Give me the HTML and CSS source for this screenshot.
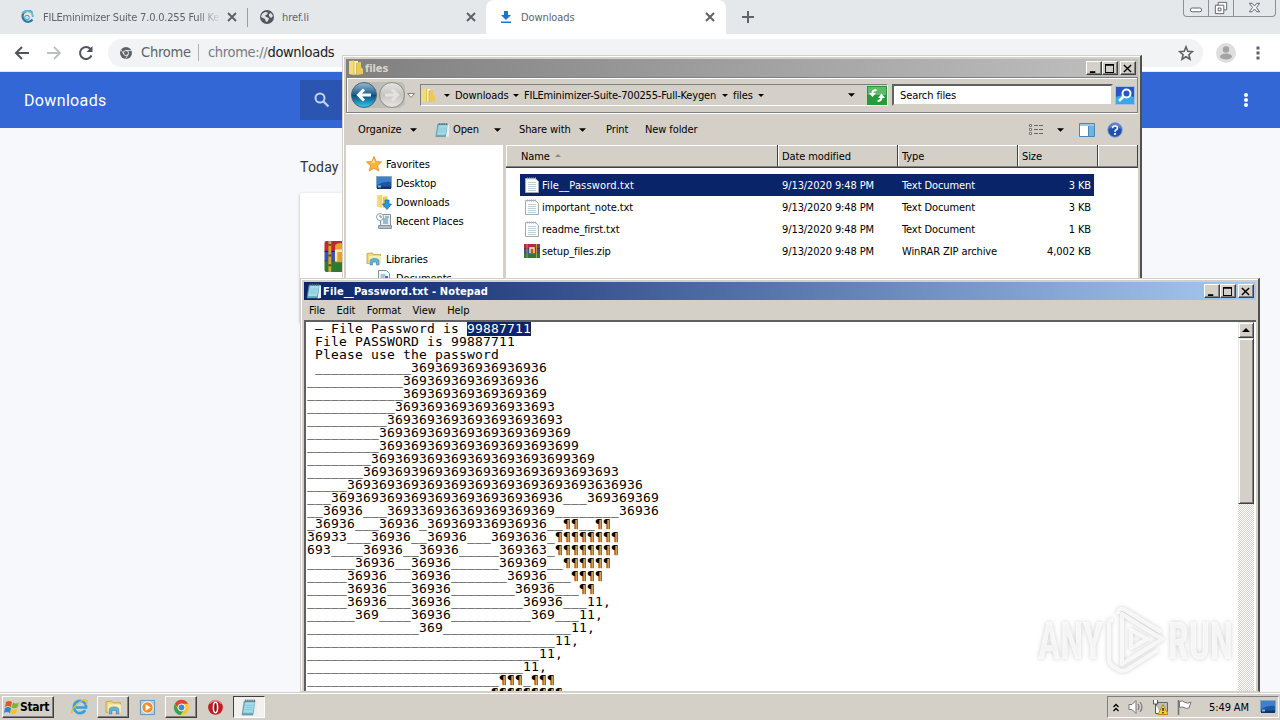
FILE: index.html
```html
<!DOCTYPE html>
<html lang="en">
<head>
  <meta charset="UTF-8" />
  <title>Downloads</title>
  <link rel="stylesheet" href="styles.css">
</head>
<body>
  <!-- Shared icons -->
  <svg class="sprite" aria-hidden="true">
    <symbol id="i-close" viewBox="0 0 10 10"><path d="M1 1l8 8M9 1L1 9" stroke="#5f6368" stroke-width="2" /></symbol>
    <symbol id="i-caret" viewBox="0 0 8 4"><path d="M0 0h8L4 4z" /></symbol>
    <symbol id="i-chrome" viewBox="0 0 24 24">
      <circle cx="12" cy="12" r="12" fill="#5f6368" />
      <circle cx="12" cy="12" r="5" fill="#5f6368" stroke="#f1f3f4" stroke-width="1.8" />
      <path d="M12 7h11M7.6 14.4L2.2 5.6M16.4 14.4L11.5 23" stroke="#f1f3f4" stroke-width="1.6" />
    </symbol>
    <symbol id="i-doc" viewBox="0 0 14 16">
      <path d="M.5 1.5h10l3 3v11H.5z" fill="#fbfcfc" stroke="#a3abae" />
      <path d="M2 1.5h9" stroke="#a6b4ba" stroke-width="2" stroke-dasharray="1 1" />
      <path d="M3 5.5h8M3 7.5h8M3 9.5h8M3 11.5h8M3 13.5h8" stroke="#c3ced4" />
    </symbol>
    <symbol id="i-notepad" viewBox="0 0 16 16">
      <path d="M3 2h10.500l-2 13H1z" fill="#69afc2" stroke="#57808e" stroke-width=".6" />
      <path d="M4 3h9l-2 10H2z" fill="#a2dcea" />
      <path d="M13.5 2l1.5.5V15l-3.500.5z" fill="#e7edf0" />
      <path d="M4 1.5h10" stroke="#4d5c63" stroke-width="2" stroke-dasharray="1 1" />
      <path d="M4 6h7M4 8h7M3.500 10h7" stroke="#7dc2d4" stroke-width=".7" />
    </symbol>
    <symbol id="i-folder" viewBox="0 0 16 16">
      <path d="M1 1l5-.5v14.500l-5-1z" fill="#f3dc78" />
      <path d="M6 1h4v13.500H6z" fill="#fdf6c4" />
      <path d="M6 .5v14.500" stroke="#d3b344" stroke-width=".8" />
      <path d="M8.500 2.500l4.500-.5v5l2 2v5l-6.500 1z" fill="#ebcb55" />
      <path d="M8.500 3v12" stroke="#c7a33a" stroke-width=".7" />
    </symbol>
    <symbol id="i-library" viewBox="0 0 16 14">
      <path d="M1 1.500l5-.5 2 1.500h6.500v9H1z" fill="#f0d978" stroke="#bf9c3d" stroke-width=".8" />
      <path d="M3 4h12v8H3z" fill="#f9efb5" />
      <path d="M4 13V9q0-2.500 4.500-2.500T13 9v4h-2.500v-3h-4v3z" fill="#5db3da" stroke="#3c88b3" stroke-width=".6" />
    </symbol>
    <symbol id="i-rar" viewBox="0 0 16 16">
      <path d="M0 1h16v5H0z" fill="#b62743" /><path d="M0 6h16v4.500H0z" fill="#3454aa" /><path d="M0 10.500h16V15H0z" fill="#287d37" />
      <path d="M11 1h5v5h-5z" fill="#7a3c8f" />
      <path d="M0 5.700h16M0 10.300h16" stroke="#2d2433" stroke-width=".6" />
      <path d="M3 1v14M12.500 1v14" stroke="#bd983b" stroke-width="1" />
      <path d="M5 4h6v7H5z" fill="#c8541e" /><path d="M6 10V5h4v5" fill="none" stroke="#f6e7bc" stroke-width="1.300" />
    </symbol>
    <symbol id="i-screen" viewBox="0 0 16 14">
      <path d="M.5.500h15v11H.5z" fill="#1f55a3" stroke="#85a6c4" />
      <path d="M1 1h14v5Q8 5 1 9z" fill="#3f80ca" />
      <path d="M1 10.500h14v2.500H1z" fill="#16345e" /><path d="M2 9.500h3v2H2z" fill="#73bde0" />
    </symbol>
    <symbol id="i-min" viewBox="0 0 12 10"><path d="M2 8h6v2H2z" /></symbol>
    <symbol id="i-max" viewBox="0 0 12 10"><path d="M1 0h10v10H1zM2 2v7h8V2z" fill-rule="evenodd" /></symbol>
    <symbol id="i-x" viewBox="0 0 12 10"><path d="M2 1l8 8M10 1L2 9" stroke="#000" stroke-width="1.600" /></symbol>
    <linearGradient id="g-back" x1="0" y1="0" x2="0" y2="1">
      <stop offset="0" stop-color="#9ab9cf" /><stop offset=".48" stop-color="#1d5f94" /><stop offset=".5" stop-color="#0d4579" /><stop offset="1" stop-color="#2fd0f2" />
    </linearGradient>
    <linearGradient id="g-fwd" x1="0" y1="0" x2="0" y2="1">
      <stop offset="0" stop-color="#e6e5e2" /><stop offset=".5" stop-color="#c6c4be" /><stop offset="1" stop-color="#e9e8e5" />
    </linearGradient>
  </svg>

  <!-- Browser -->
  <div class="browser">
    <div class="tabs">
      <div class="tab tab-first">
        <svg class="tab-icon" viewBox="0 0 14 14"><path d="M12 2.500a5.500 5.500 0 1 0 .5 7" fill="none" stroke="#247f9c" stroke-width="2.200" /><path d="M2 3q6-4 10 0l1 4" fill="none" stroke="#71b8cc" stroke-width="2" /><circle cx="7" cy="7.500" r="2.300" fill="#c2e7f2" stroke="#3a9bc0" /></svg>
        <span class="tab-title tab-fade">FILEminimizer Suite 7.0.0.255 Full Ke</span>
        <svg class="tab-close"><use href="#i-close" /></svg>
      </div>
      <div class="tab tab-second">
        <svg class="tab-icon" viewBox="0 0 14 14"><circle cx="7" cy="7" r="7" fill="#54585c" /><path d="M2 4l3-2 3 .5-1 2-2 1 1 1.500 3 1-1 3-2 1-1-3-2-1-2-1zM9 4l2-1 2 3-2 2-2-2z" fill="#e1e4e7" /></svg>
        <span class="tab-title">href.li</span>
        <svg class="tab-close"><use href="#i-close" /></svg>
      </div>
      <div class="tab tab-active">
        <svg class="tab-icon" viewBox="0 0 14 14"><path d="M5 1h4v4h3L7 10 2 5h3zM2 11.500h10v1.600H2z" fill="#1a73d9" /></svg>
        <span class="tab-title">Downloads</span>
        <svg class="tab-close"><use href="#i-close" /></svg>
      </div>
      <svg class="new-tab" viewBox="0 0 12 12"><path d="M6 0v12M0 6h12" stroke="#5f6368" stroke-width="2" /></svg>
      <div class="caption">
        <svg viewBox="0 0 25 17"><rect x="6.500" y="8.500" width="12" height="4" rx="2" fill="#fff" stroke="#5a5f66" /></svg>
        <svg viewBox="0 0 25 17"><path d="M9.500 2.500h9v8h-9z" fill="#fff" stroke="#5a5f66" /><path d="M6.500 5.500h9v9h-9z" fill="#fff" stroke="#5a5f66" /><path d="M9.500 8.500h3v3h-3z" fill="none" stroke="#5a5f66" /></svg>
        <svg class="caption-close" viewBox="0 0 42 17"><path d="M15.500 3.500h3l2.500 3 2.500-3h3l-3.500 4.500 3.500 4.500h-3l-2.500-3-2.500 3h-3l3.500-4.500z" fill="#fff" stroke="#5a5f66" /></svg>
      </div>
    </div>
    <div class="toolbar">
      <svg class="nav-icon" viewBox="0 0 16 16"><path d="M15 8H2M8 2L2 8l6 6" fill="none" stroke="#50545a" stroke-width="2" /></svg>
      <svg class="nav-icon" viewBox="0 0 16 16"><path d="M1 8h13M8 2l6 6-6 6" fill="none" stroke="#bcbfc3" stroke-width="1.800" /></svg>
      <svg class="nav-icon" viewBox="0 0 16 16"><path d="M13.500 10.500A6 6 0 1 1 12.500 4" fill="none" stroke="#50545a" stroke-width="2" /><path d="M14.500 1v6h-6z" fill="#50545a" /></svg>
      <div class="omnibox">
        <svg class="site-icon"><use href="#i-chrome" /></svg>
        <span class="site-name">Chrome</span>
        <span class="url">chrome://<b>downloads</b></span>
        <svg class="star" viewBox="0 0 16 16"><path d="M8 1.800l1.800 4.400 4.700.4-3.600 3.100 1.100 4.600L8 11.800l-4 2.500 1.100-4.600-3.600-3.100 4.700-.4z" fill="none" stroke="#5f6368" stroke-width="1.600" /></svg>
      </div>
      <svg class="avatar" viewBox="0 0 20 20"><circle cx="10" cy="10" r="10" fill="#dedede" /><circle cx="10" cy="6.500" r="3.200" fill="#a3a3a3" /><ellipse cx="10" cy="13.500" rx="6" ry="3" fill="#a3a3a3" /></svg>
      <svg class="dots" viewBox="0 0 4 14"><path d="M.5.500h3v3h-3zM.5 5.500h3v3h-3zM.5 10.500h3v3h-3z" fill="#5f6368" /></svg>
    </div>
    <div class="page-header">
      <span class="page-title">Downloads</span>
      <div class="page-search"><svg viewBox="0 0 16 16"><circle cx="6" cy="6" r="4.500" fill="none" stroke="#c4d2f0" stroke-width="2" /><path d="M9.500 9.500l5 5" stroke="#c4d2f0" stroke-width="2.200" /></svg></div>
      <svg class="page-dots" viewBox="0 0 4 14"><circle cx="2" cy="2" r="2" /><circle cx="2" cy="7" r="2" /><circle cx="2" cy="12" r="2" /></svg>
    </div>
    <div class="page">
      <div class="today">Today</div>
      <div class="card">
        <svg viewBox="0 0 32 32">
          <path d="M0 2q0-2 2-2h30v10H0z" fill="#c3262f" /><path d="M0 11h32v9H0z" fill="#3a50b4" /><path d="M0 21h32v11H2q-2 0-2-2z" fill="#2c7a34" />
          <path d="M0 10.500h32M0 20.500h32" stroke="#2b2230" stroke-width="1.500" />
          <path d="M5.500 0v32" stroke="#d3a733" stroke-width="3" /><path d="M4 4h3M4 15h3M4 25h3" stroke="#6d4a17" stroke-width="2" />
          <path d="M11 4q5-4 10 0v18H11z" fill="#e0a32e" /><path d="M12 21V10h8v11" fill="none" stroke="#fbe9b0" stroke-width="2.500" />
        </svg>
      </div>
    </div>
  </div>

  <!-- Explorer -->
  <div class="window explorer">
    <div class="titlebar titlebar-inactive">
      <svg class="title-icon"><use href="#i-folder" /></svg>
      <span class="title-text">files</span>
      <div class="win-btn"><svg><use href="#i-min" /></svg></div>
      <div class="win-btn"><svg><use href="#i-max" /></svg></div>
      <div class="win-btn win-close"><svg><use href="#i-x" /></svg></div>
    </div>
    <div class="address-band">
      <svg class="back-forward" viewBox="0 0 66 30">
        <path d="M12 2h40l3 4v18l-5 4H12z" fill="#bfbdb8" />
        <circle cx="14" cy="15" r="12.500" fill="url(#g-back)" stroke="#49637b" />
        <path d="M21 15H9M14 9.500L8.500 15l5.500 5.500" fill="none" stroke="#fff" stroke-width="3" />
        <circle cx="42" cy="15" r="12.500" fill="url(#g-fwd)" stroke="#8c8b87" />
        <path d="M35 15h12M42 9.500l5.500 5.500-5.500 5.500" fill="none" stroke="#e4e3e0" stroke-width="3" />
        <path d="M57.500 13.500h7L61 17.500z" fill="#fff" stroke="#807f7c" />
      </svg>
      <div class="address">
        <svg class="address-icon"><use href="#i-folder" /></svg>
        <svg class="caret-sm"><use href="#i-caret" /></svg>
        <span class="crumb crumb-downloads">Downloads</span>
        <svg class="caret-sm"><use href="#i-caret" /></svg>
        <span class="crumb crumb-suite">FILEminimizer-Suite-700255-Full-Keygen</span>
        <svg class="caret-sm"><use href="#i-caret" /></svg>
        <span class="crumb crumb-files">files</span>
        <svg class="caret-sm"><use href="#i-caret" /></svg>
        <svg class="caret address-drop"><use href="#i-caret" /></svg>
        <svg class="refresh" viewBox="0 0 20 19"><path d="M0 0h20v19H0z" fill="#279b38" /><path d="M1 1h18v8H1z" fill="#62b96b" /><path d="M5.500 7q0-3 4-3" fill="none" stroke="#fff" stroke-width="2" /><path d="M2 7h7L5.500 11z" fill="#fff" /><path d="M14.500 11q0 4-4 4" fill="none" stroke="#fff" stroke-width="2" /><path d="M11 12h7l-3.500-4.500z" fill="#fff" /></svg>
      </div>
      <div class="search-field">Search files</div>
      <svg class="search-go" viewBox="0 0 20 19"><path d="M.5.500h19v18H.5z" fill="#2457c5" stroke="#a9bde5" /><path d="M1 11q9-4 18 0v7H1z" fill="#35a9e8" /><circle cx="11.500" cy="7.500" r="4" fill="#2457c5" stroke="#fff" stroke-width="2" /><path d="M8.500 10.500L4 15" stroke="#fff" stroke-width="2.500" /></svg>
    </div>
    <div class="commands">
      <span class="cmd cmd-organize">Organize</span>
      <svg class="caret"><use href="#i-caret" /></svg>
      <svg class="cmd-icon"><use href="#i-notepad" /></svg>
      <span class="cmd cmd-open">Open</span>
      <svg class="caret"><use href="#i-caret" /></svg>
      <span class="cmd cmd-share">Share with</span>
      <svg class="caret"><use href="#i-caret" /></svg>
      <span class="cmd cmd-print">Print</span>
      <span class="cmd cmd-new">New folder</span>
      <svg class="view-mode" viewBox="0 0 16 12"><path d="M1.500.500h2v2h-2zM1.500 4.500h2v2h-2zM1.500 8.500h2v2h-2z" fill="#fff" stroke="#777" /><path d="M6 1.500h10M6 5.500h10M6 9.500h10" stroke="#666" stroke-dasharray="4 1" /></svg>
      <svg class="caret view-drop"><use href="#i-caret" /></svg>
      <svg class="preview" viewBox="0 0 16 14"><path d="M.5.500h15v13H.5z" fill="#fff" stroke="#4d85b2" /><path d="M1 1h14v2H1z" fill="#9cc7e3" /><path d="M10 3h5v10h-5z" fill="#6bb5e1" /><path d="M9.500 3v10" stroke="#4d85b2" /></svg>
      <svg class="help" viewBox="0 0 16 16"><circle cx="8" cy="8" r="7.300" fill="#2451ae" stroke="#8ba5d3" /><path d="M2 7q6-6 12 0a6 6 0 0 0-12 0" fill="#6285d0" /><path d="M5.500 6.200Q5.600 4 8 4t2.500 2Q10.500 7.300 9 8q-1 .6-1 1.800M8 11v2" fill="none" stroke="#fff" stroke-width="1.700" /></svg>
    </div>
    <div class="explorer-main">
      <div class="nav-pane">
        <div class="nav-item nav-top"><svg viewBox="0 0 16 16"><path d="M8 .5l2.200 5 5.300.5-4 3.700 1.200 5.300L8 12.300 3.300 15l1.200-5.300L.5 6l5.300-.5z" fill="#fab53b" stroke="#e08a2c" stroke-width=".8" /><path d="M8 3l1.200 3.500-4 .5z" fill="#fde39c" /></svg><span>Favorites</span></div>
        <div class="nav-item"><svg><use href="#i-screen" /></svg><span>Desktop</span></div>
        <div class="nav-item"><svg viewBox="0 0 16 16"><use href="#i-folder" width="14" height="15" /><path d="M9 6h4v4h2.500L11 15.500 6.500 10H9z" fill="#259be0" stroke="#1562a0" stroke-width=".7" /></svg><span>Downloads</span></div>
        <div class="nav-item"><svg viewBox="0 0 16 16"><path d="M4.500 1.500h10v11h-10z" fill="#e8eef2" stroke="#82939e" /><path d="M2.500 12.500h13v3h-13z" fill="#b2bdc4" stroke="#8596a1" /><circle cx="4" cy="4" r="3.500" fill="#fff" stroke="#93a4af" /><path d="M4 2v2h2M7 6h5M7 8h5M9 4h4M7 10h5" fill="none" stroke="#5284a8" /></svg><span>Recent Places</span></div>
        <div class="nav-item nav-top nav-library"><svg><use href="#i-library" /></svg><span>Libraries</span></div>
        <div class="nav-item"><svg viewBox="0 0 16 16"><path d="M2.500.500h8l3 3v12h-11z" fill="#f6f9fb" stroke="#7e93a2" /><path d="M4.500 5h5M4.500 7h4M4.500 9h4" stroke="#5c8fb9" /><path d="M9 6h3v4H9z" fill="#3976ac" /></svg><span>Documents</span></div>
      </div>
      <div class="file-pane">
        <div class="columns">
          <div class="col">Name <svg class="sort" viewBox="0 0 6 3"><path d="M0 3h6L3 0z" fill="#8c8a84" /></svg></div>
          <div class="col">Date modified</div>
          <div class="col">Type</div>
          <div class="col">Size</div>
          <div class="col"></div>
        </div>
        <div class="files">
          <div class="file selected"><svg class="doc"><use href="#i-doc" /></svg><span class="file-wide">File__Password.txt</span><span>9/13/2020 9:48 PM</span><span>Text Document</span><span class="size">3 KB</span></div>
          <div class="file"><svg class="doc"><use href="#i-doc" /></svg><span>important_note.txt</span><span>9/13/2020 9:48 PM</span><span>Text Document</span><span class="size">3 KB</span></div>
          <div class="file"><svg class="doc"><use href="#i-doc" /></svg><span>readme_first.txt</span><span>9/13/2020 9:48 PM</span><span>Text Document</span><span class="size">1 KB</span></div>
          <div class="file"><svg><use href="#i-rar" /></svg><span>setup_files.zip</span><span>9/13/2020 9:48 PM</span><span>WinRAR ZIP archive</span><span class="size">4,002 KB</span></div>
        </div>
      </div>
    </div>
  </div>

  <!-- Notepad -->
  <div class="window notepad">
    <div class="titlebar">
      <svg class="title-icon"><use href="#i-notepad" /></svg>
      <span class="title-text title-notepad">File__Password.txt - Notepad</span>
      <div class="win-btn"><svg><use href="#i-min" /></svg></div>
      <div class="win-btn"><svg><use href="#i-max" /></svg></div>
      <div class="win-btn win-close"><svg><use href="#i-x" /></svg></div>
    </div>
    <div class="menu"><span>File</span><span>Edit</span><span>Format</span><span>View</span><span>Help</span></div>
    <div class="editor">
<pre class="text"> – File Password is <mark>99887711</mark>
 File PASSWORD is 99887711
 Please use the password
 ____________36936936936936936
____________36936936936936936
____________369369369369369369
___________36936936936936933693
__________3693693693693693693693
_________369369369369369369369369
_________3693693693693693693693699
________3693693693693693693693699369
_______36936939693693693693693693693693
_____3693693693693693693693693693693636936
___36936936936936936936936936936___369369369
__36936___369336936369369369369________36936
_36936___36936_369369336936936__¶¶__¶¶
36933___36936__36936___3693636_¶¶¶¶¶¶¶¶
693____36936__36936_____369363_¶¶¶¶¶¶¶¶
______36936__36936______369369__¶¶¶¶¶¶
_____36936___36936_______36936___¶¶¶¶
_____36936___36936________36936___¶¶
_____36936___36936_________36936___11,
______369____36936__________369___11,
______________369________________11,
_______________________________11,
_____________________________11,
___________________________11,
________________________¶¶¶_¶¶¶
_______________________¶¶¶¶¶¶¶¶¶</pre>
      <div class="scrollbar">
        <div class="scroll-btn"><svg viewBox="0 0 8 4"><path d="M0 4h8L4 0z" /></svg></div>
        <div class="thumb"></div>
      </div>
    </div>
  </div>

  <svg class="watermark" viewBox="0 0 204 72">
    <text x="4" y="55" textLength="65" lengthAdjust="spacingAndGlyphs">ANY</text>
    <path d="M88 10v50l40-25zM79 16q-4 0-4 4v34q0 6 5 9l5 3q5 2 9-1l30-19" />
    <path d="M84 10q0-7 7-4l36 22M97 26v18l16-9z" />
    <text x="134" y="55" textLength="65" lengthAdjust="spacingAndGlyphs">RUN</text>
  </svg>

  <!-- Taskbar -->
  <div class="taskbar">
    <div class="start">
      <svg viewBox="0 0 16 15"><path d="M2 2q3-2 6 0L7 7Q4 5 1 7z" fill="#e85427" /><path d="M9 2.500q3 2 6 0l-1.500 5q-3 1.500-6 0z" fill="#76b82c" /><path d="M1 8q3-2 6 0l-1 5Q3 11 0 13z" fill="#2f86d3" /><path d="M7.500 8.500q3 2 6 0l-1.500 5q-3 1.500-6 0z" fill="#f6c324" /></svg>
      <span>Start</span>
    </div>
    <div class="task"><svg viewBox="0 0 18 18"><path d="M15 12a6.500 6.500 0 1 1 1-3H5" fill="none" stroke="#38a1dc" stroke-width="2.800" /><path d="M1 15Q0 11 7 5t10-3q1 1-1 4" fill="none" stroke="#e6b83a" stroke-width="1.300" /></svg></div>
    <div class="task raised"><svg><use href="#i-library" /></svg></div>
    <div class="task"><svg viewBox="0 0 18 18"><path d="M1.500 1.500h15v15h-15z" fill="#a9d4ec" stroke="#5795bb" /><circle cx="9" cy="9" r="6" fill="#f38b22" stroke="#fff" /><path d="M7 5.500v7L12.500 9z" fill="#fff" /></svg></div>
    <div class="task raised"><svg viewBox="0 0 18 18"><circle cx="9" cy="9" r="8" fill="#f8c72f" /><path d="M2 5a8 8 0 0 1 14 0H9a4 4 0 0 0-4 4z" fill="#dc4535" /><path d="M2 5a8 8 0 0 0 6 12l3.500-5A4 4 0 0 1 5.500 11z" fill="#34a354" /><circle cx="9" cy="9" r="3.700" fill="#4285e8" stroke="#fff" /></svg></div>
    <div class="task"><svg viewBox="0 0 18 18"><circle cx="9" cy="9" r="7.800" fill="#c51b23" /><path d="M3 5a7 7 0 0 1 12 0" fill="none" stroke="#e98080" stroke-width="1.500" /><ellipse cx="9" cy="9" rx="2.200" ry="5.500" fill="#8d1218" stroke="#fff" stroke-width="1.600" /></svg></div>
    <div class="task pressed"><svg><use href="#i-notepad" /></svg></div>
    <div class="tray">
      <svg class="tray-up" viewBox="0 0 6 8"><path d="M.5 3.500L3 1l2.500 2.500M.5 7.500L3 5l2.500 2.500" fill="none" stroke="#000" stroke-width="1.300" /></svg>
      <svg class="tray-icon" viewBox="0 0 16 16"><path d="M1 5.500h3l4-4v13l-4-4H1z" fill="#fff" stroke="#777" /><path d="M10 5q2 3 0 6M12 3q4 5 0 10" fill="none" stroke="#777" stroke-width="1.200" /></svg>
      <svg class="tray-icon" viewBox="0 0 16 16"><path d="M4.500 3.500h11v9h-11z" fill="#b9bdc0" stroke="#666" /><path d="M1.500 1v4h4V1M3.500 5v9.500h5" fill="#fff" stroke="#555" /><path d="M11 5.500l5 10H6z" fill="#f8d425" stroke="#b68c12" /><path d="M11 9v3M11 13v1.500" stroke="#222" stroke-width="1.400" /></svg>
      <svg class="tray-icon" viewBox="0 0 16 16"><path d="M2.500 1v15" stroke="#777" stroke-width="1.600" /><path d="M3.500 2.500q3-1.500 5.500 1 3 1.500 6-.5l-2 6q-3 1-5-.5-2-1-4.500 0z" fill="#fff" stroke="#777" /></svg>
      <span class="clock">5:49 AM</span>
      <svg class="tray-screen"><use href="#i-screen" /></svg>
    </div>
  </div>
</body>
</html>
```
FILE: styles.css
```css
* {
  box-sizing: border-box;
}
body {
  margin: 0;
  width: 1280px;
  height: 720px;
  overflow: hidden;
  position: relative;
  font-family: "DejaVu Sans Condensed", "DejaVu Sans", sans-serif;
  font-stretch: condensed;
  font-size: 11px;
  letter-spacing: -0.1px;
  color: #000;
}
svg {
  display: block;
  flex-shrink: 0;
}
.sprite {
  position: absolute;
  width: 0;
  height: 0;
}
span {
  white-space: nowrap;
}

/* Browser */
.browser {
  height: 692px;
  background: #f6f8fb;
}
.tabs {
  display: flex;
  height: 34px;
  background: #e5e8eb;
}
.tab {
  display: flex;
  align-items: center;
  height: 34px;
  color: #5f6368;
}
.tab-first {
  width: 248px;
  padding: 0 11px 0 20px;
  background: linear-gradient(#9a9da1, #9a9da1) 247px 8px / 1px 19px no-repeat;
}
.tab-second {
  width: 238px;
  padding: 0 10px 0 12px;
}
.tab-active {
  width: 240px;
  padding: 0 11px 0 13px;
  background: #fff;
  border-radius: 8px 8px 0 0;
}
.tab-icon {
  width: 14px;
  height: 14px;
}
.tab-title {
  margin-left: 8px;
}
.tab-fade {
  width: 176px;
  margin-left: 9px;
  letter-spacing: -0.2px;
  mask-image: linear-gradient(90deg, #000 155px, transparent 178px);
}
.tab-close {
  width: 10px;
  height: 10px;
  margin-left: auto;
}
.new-tab {
  width: 12px;
  height: 12px;
  margin: 11px 0 0 16px;
}
.caption {
  display: flex;
  width: 93px;
  height: 17px;
  margin: 0 4px 0 auto;
  border: 1px solid #8d9196;
  border-top: 0;
  border-radius: 0 0 4px 4px;
}
.caption svg {
  width: 25px;
  height: 16px;
  border-right: 1px solid #8d9196;
}
.caption .caption-close {
  width: 41px;
  border: 0;
}
.toolbar {
  display: flex;
  align-items: center;
  height: 38px;
  padding-left: 14px;
  background: #fff;
  border-bottom: 1px solid #e6e8ea;
}
.nav-icon {
  width: 16px;
  height: 16px;
  margin-right: 16px;
}
.omnibox {
  display: flex;
  align-items: center;
  width: 1095px;
  height: 28px;
  margin-left: -2px;
  padding: 0 9px 0 12px;
  border-radius: 14px;
  background: #f1f3f4;
  font-size: 14.5px;
  line-height: 17px;
  color: #5f6368;
}
.site-icon {
  width: 12px;
  height: 12px;
}
.site-name {
  width: 58px;
  margin-left: 9px;
  border-right: 1px solid #aeb1b5;
  letter-spacing: -0.2px;
}
.url {
  margin-left: 9px;
  color: #777b80;
  letter-spacing: -0.33px;
}
.url b {
  font-weight: normal;
  color: #202124;
}
.star {
  width: 16px;
  height: 16px;
  margin-left: auto;
}
.avatar {
  width: 20px;
  height: 20px;
  margin-left: 13px;
}
.dots {
  width: 4px;
  height: 14px;
  margin-left: 20px;
}
.page-header {
  display: flex;
  align-items: center;
  height: 56px;
  padding: 0 32px 0 24px;
  background: #3367d6;
  color: #fff;
  font-family: Roboto, sans-serif;
  font-stretch: normal;
  font-size: 16px;
  letter-spacing: 0.35px;
}
.page-title {
  width: 276px;
}
.page-search {
  width: 680px;
  height: 40px;
  padding: 12px 14px;
  background: #2a55b0;
}
.page-search svg {
  width: 16px;
  height: 16px;
}
.page-dots {
  width: 4px;
  height: 14px;
  margin-left: auto;
  fill: #fff;
}
.page {
  padding: 29px 0 0 300px;
}
.today {
  height: 36px;
  font-family: Roboto, sans-serif;
  font-stretch: normal;
  font-size: 14px;
  line-height: 20px;
  letter-spacing: 0.2px;
  color: #333;
}
.card {
  width: 680px;
  height: 130px;
  padding: 48px 24px;
  background: #fff;
  border-radius: 2px;
  box-shadow: 0 1px 3px rgba(0, 0, 0, 0.3);
}
.card svg {
  width: 32px;
  height: 31px;
}

/* Windows */
.window {
  position: absolute;
  background: #d4d0c8;
  border: 1px solid #d4d0c8;
  border-right: 2px solid #505050;
  box-shadow: inset 1px 1px 0 #fff;
}
.explorer {
  left: 342px;
  top: 55px;
  width: 800px;
  height: 230px;
  padding: 3px 2px 0 3px;
}
.notepad {
  left: 300px;
  top: 278px;
  width: 960px;
  height: 414px;
  padding: 3px 2px 0 3px;
  overflow: hidden;
}
.titlebar {
  display: flex;
  align-items: center;
  height: 18px;
  padding: 0 2px;
  background: linear-gradient(90deg, #0a246a, #a6caf0);
  color: #fff;
  font-weight: bold;
}
.titlebar-inactive {
  background: linear-gradient(90deg, #808080, #c0c0c0);
  color: #d9d5cd;
}
.title-icon {
  width: 16px;
  height: 16px;
}
.title-text {
  margin: 0 auto 0 1px;
}
.title-notepad {
  letter-spacing: 0.13px;
}
.win-btn {
  width: 16px;
  height: 14px;
  padding: 2px 1px;
  background: #d4d0c8;
  border: 1px solid;
  border-color: #fff #404040 #404040 #fff;
  box-shadow: inset -1px -1px 0 #808080;
}
.win-btn svg {
  width: 11px;
  height: 9px;
}
.win-close {
  margin-left: 2px;
}

/* Explorer */
.address-band {
  display: flex;
  align-items: center;
  height: 36px;
  margin-bottom: 1px;
  padding: 0 2px 0 3px;
  border: 1px solid #808080;
  box-shadow: inset 1px 1px 0 #fff, 0 1px 0 #fff;
}
.back-forward {
  width: 66px;
  height: 30px;
}
.address {
  display: flex;
  align-items: center;
  width: 468px;
  height: 22px;
  margin-left: 4px;
  border: 1px solid;
  border-color: #808080 #fff #fff #808080;
}
.address-icon {
  width: 15px;
  height: 17px;
  margin-right: 8px;
}
.caret-sm {
  width: 6px;
  height: 3px;
}
.caret {
  width: 7px;
  height: 4px;
}
.crumb {
  margin: 0 0 0 5px;
}
.crumb-downloads {
  width: 58px;
}
.crumb-suite {
  width: 198px;
  letter-spacing: -0.2px;
}
.crumb-files {
  width: 25px;
}
.address-drop {
  margin-left: auto;
}
.refresh {
  width: 20px;
  height: 19px;
  margin-left: 12px;
}
.search-field {
  width: 221px;
  height: 22px;
  margin-left: 4px;
  padding-left: 6px;
  background: #fff;
  border: 2px solid;
  border-color: #606060 #d4d0c8 #d4d0c8 #606060;
  line-height: 20px;
}
.search-go {
  width: 20px;
  height: 19px;
  margin-left: 2px;
}
.commands {
  display: flex;
  align-items: center;
  height: 31px;
  padding-left: 12px;
}
.cmd-organize {
  width: 52px;
}
.cmd-icon {
  width: 15px;
  height: 16px;
  margin: 0 3px 0 18px;
}
.cmd-open {
  width: 41px;
}
.cmd-share {
  width: 60px;
  margin-left: 18px;
}
.cmd-print {
  width: 39px;
  margin-left: 20px;
}
.view-mode {
  width: 16px;
  height: 12px;
  margin-left: auto;
}
.view-drop {
  margin-left: 13px;
}
.preview {
  width: 16px;
  height: 14px;
  margin-left: 15px;
}
.help {
  width: 16px;
  height: 16px;
  margin: 0 15px 0 12px;
}
.explorer-main {
  display: flex;
  height: 140px;
}
.nav-pane {
  width: 157px;
  padding-top: 9px;
  background: #fff;
}
.nav-item {
  display: flex;
  align-items: center;
  height: 19px;
  padding-left: 30px;
}
.nav-item svg {
  width: 16px;
  height: 16px;
}
.nav-item span {
  margin: 1px 0 0 4px;
}
.nav-top {
  padding-left: 20px;
}
.nav-library {
  margin-top: 19px;
}
.file-pane {
  flex: 1;
  margin-left: 3px;
  background: #fff;
}
.columns {
  display: grid;
  grid-template-columns: 272px 120px 120px 80px 1fr;
  height: 23px;
  background: #d4d0c8;
  border-bottom: 1px solid #404040;
}
.col {
  display: flex;
  align-items: center;
  padding: 2px 0 0 4px;
  border-right: 1px solid #404040;
  border-bottom: 1px solid #808080;
  box-shadow: inset 1px 1px 0 #fff;
}
.col:first-child {
  padding-left: 15px;
}
.sort {
  width: 6px;
  height: 3px;
  margin: -3px 0 0 5px;
}
.files {
  padding: 6px 44px 0 14px;
}
.file {
  display: grid;
  grid-template-columns: 22px 240px 120px 120px 1fr;
  align-items: center;
  height: 22px;
  padding-right: 3px;
}
.file svg {
  width: 16px;
  height: 16px;
  margin-left: 4px;
}
.file .doc {
  width: 14px;
  margin-left: 5px;
}
.file-wide {
  letter-spacing: 0.15px;
}
.size {
  text-align: right;
}
.selected {
  background: #0a246a;
  color: #fff;
}

/* Notepad */
.menu {
  display: flex;
  align-items: center;
  gap: 11.5px;
  height: 20px;
  padding-left: 5px;
}
.editor {
  display: flex;
  height: 372px;
  background: #fff;
  border: 1px solid #404040;
  border-width: 2px 0 0 2px;
  border-color: #606060;
}
.text {
  flex: 1;
  margin: 0;
  padding-left: 1px;
  overflow: hidden;
  font-family: "DejaVu Sans Mono", monospace;
  font-stretch: normal;
  font-size: 13px;
  line-height: 13px;
  letter-spacing: 0.174px;
}
.text mark {
  background: #0a246a;
  color: #fff;
}
.scrollbar {
  width: 16px;
  margin-right: 2px;
  background: repeating-conic-gradient(#d4d0c8 0 25%, #fff 0 50%) 0 0 / 2px 2px;
}
.scroll-btn,
.thumb {
  height: 16px;
  background: #d4d0c8;
  border: 1px solid;
  border-color: #e8e6e1 #404040 #404040 #e8e6e1;
  box-shadow: inset 1px 1px 0 #fff, inset -1px -1px 0 #808080;
}
.scroll-btn {
  padding: 5px 3px;
}
.scroll-btn svg {
  width: 8px;
  height: 4px;
}
.thumb {
  height: 166px;
}

/* Watermark over the desktop */
.watermark {
  position: absolute;
  left: 1034px;
  top: 604px;
  width: 204px;
  height: 72px;
  overflow: visible;
  filter: drop-shadow(0 0 2px rgba(0, 0, 0, 0.26));
  fill: rgba(255, 255, 255, 0.75);
  font-family: Roboto, sans-serif;
  font-weight: bold;
  font-size: 51px;
  letter-spacing: 0;
}
.watermark path {
  fill: none;
  stroke: rgba(255, 255, 255, 0.75);
  stroke-width: 4;
  stroke-linejoin: round;
}

/* Taskbar */
.taskbar {
  display: flex;
  align-items: center;
  position: absolute;
  left: 0;
  top: 692px;
  width: 1280px;
  height: 28px;
  padding: 2px 1px 0 2px;
  background: #d4d0c8;
  box-shadow: inset 0 1px 0 #d4d0c8, inset 0 2px 0 #fff;
}
.start {
  display: flex;
  align-items: center;
  width: 52px;
  height: 22px;
  margin-right: 9px;
  padding-left: 1px;
  border: 1px solid;
  border-color: #fff #404040 #404040 #fff;
  box-shadow: inset -1px -1px 0 #808080;
  font-size: 12px;
  font-weight: bold;
  letter-spacing: -0.35px;
}
.start svg {
  width: 16px;
  height: 15px;
}
.task {
  display: flex;
  align-items: center;
  justify-content: center;
  width: 32px;
  height: 22px;
  margin-right: 2px;
}
.task svg {
  width: 17px;
  height: 17px;
}
.raised {
  border: 1px solid;
  border-color: #fff #404040 #404040 #fff;
  box-shadow: inset -1px -1px 0 #808080;
}
.pressed {
  background: #f3f1ee;
  border: 1px solid;
  border-color: #404040 #fff #fff #404040;
}
.tray {
  display: flex;
  align-items: center;
  width: 172px;
  height: 22px;
  margin-left: auto;
  padding-left: 5px;
  border: 1px solid;
  border-color: #808080 #fff #fff #808080;
}
.tray-up {
  width: 6px;
  height: 9px;
  margin-right: 1px;
}
.tray-icon {
  width: 16px;
  height: 16px;
  margin-left: 8px;
}
.clock {
  width: 41px;
  margin-left: 17px;
}
.tray-screen {
  width: 16px;
  height: 14px;
  margin-left: 10px;
}
```
